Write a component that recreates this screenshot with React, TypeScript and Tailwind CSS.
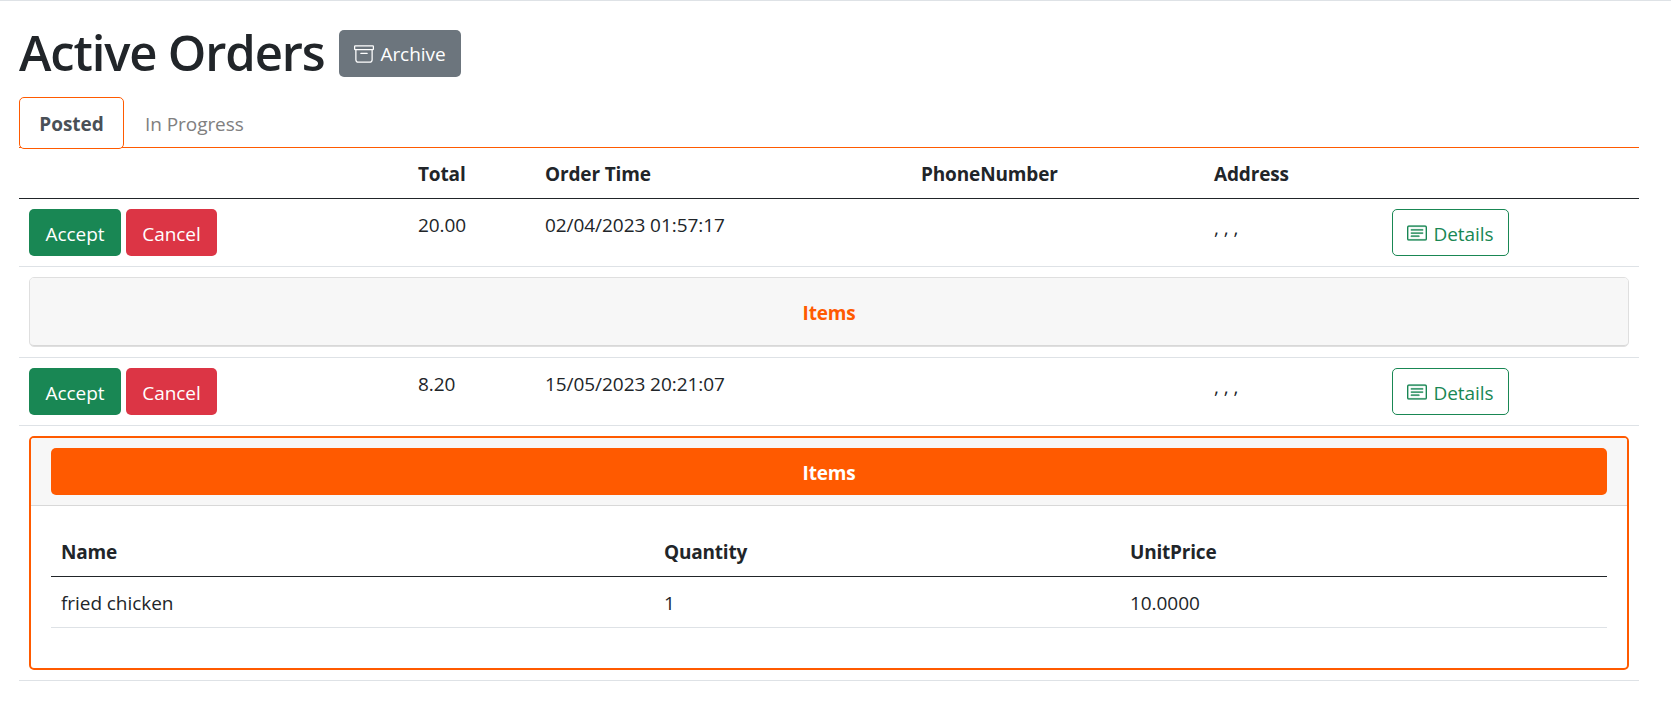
import { BsArchive, BsCardText } from "react-icons/bs";

const orders = [
  { total: "20.00", time: "02/04/2023 01:57:17", phone: "", address: ", , ," },
  { total: "8.20", time: "15/05/2023 20:21:07", phone: "", address: ", , ," },
];

const cols = "grid grid-cols-[389px_127px_376px_293px_178px_1fr]";
const itemCols = "grid grid-cols-[603px_466px_1fr]";
const button =
  "flex h-[47px] items-center justify-center rounded-[5px] text-white";

function OrderRow({ order }: { order: (typeof orders)[number] }) {
  return (
    <div className={`${cols} h-[68px] border-b border-[#dee2e6]`}>
      <div className="flex gap-[5px] px-2.5 pt-2.5">
        <button className={`${button} w-[92px] bg-[#198754] pt-0.5`}>Accept</button>
        <button className={`${button} w-[91px] bg-[#dc3545] pt-0.5`}>Cancel</button>
      </div>
      <div className="px-2.5 pt-[11px]">{order.total}</div>
      <div className="px-2.5 pt-[11px]">{order.time}</div>
      <div className="px-2.5 pt-[11px]">{order.phone}</div>
      <div className="px-2.5 pt-3.5">{order.address}</div>
      <div className="px-2.5 pt-2.5">
        <button className="flex h-[47px] w-[117px] items-center justify-center gap-1.5 rounded-[5px] border border-[#198754] text-[#198754]">
          <BsCardText size={20} strokeWidth={0.2} />
          <span className="pt-0.5">Details</span>
        </button>
      </div>
    </div>
  );
}

export default function App() {
  return (
    <div className="h-[703px] border-t border-[#dee2e6] bg-white pl-[19px] font-['Open_Sans',sans-serif] text-[19px] leading-[30px] tracking-[-0.06px] text-[#212529]">
      <div className="w-[1620px]">
        <header className="flex h-24 items-start pt-[29px]">
          <h1 className="w-80 whitespace-nowrap text-[49px] leading-[44px] font-semibold tracking-[-1.15px]">
            Active Orders
          </h1>
          <button className={`${button} w-[122px] gap-1.5 bg-[#6c757d]`}>
            <BsArchive size={20} />
            <span>Archive</span>
          </button>
        </header>

        <nav className="flex h-[51px] border-b border-[#ff5a00]">
          <button className="h-[52px] w-[105px] shrink-0 rounded-[5px] border border-[#ff5a00] bg-white pt-0.5 font-bold text-[#495057]">
            Posted
          </button>
          <button className="h-[52px] px-[21px] pt-0.5 text-[#808080]">In Progress</button>
        </nav>

        <div className={`${cols} h-[51px] border-b border-[#212529] pt-[11px] font-bold tracking-[-0.15px]`}>
          <div />
          <div className="px-2.5">Total</div>
          <div className="px-2.5">Order Time</div>
          <div className="px-2.5">PhoneNumber</div>
          <div className="px-2.5">Address</div>
          <div />
        </div>

        <OrderRow order={orders[0]} />
        <div className="border-b border-[#dee2e6] p-2.5">
          <div className="h-[70px] rounded-[5px] border border-[#dfdfdf] bg-white">
            <div className="flex h-[68px] items-center justify-center rounded-[4px] border-b border-[#d8d8d8] bg-[#f7f7f7] pt-0.5 font-bold tracking-[-0.2px] text-[#ff5a00]">
              Items
            </div>
          </div>
        </div>

        <OrderRow order={orders[1]} />
        <div className="border-b border-[#dee2e6] p-2.5">
          <div className="h-[234px] overflow-hidden rounded-[5px] border-2 border-[#ff5a00]">
            <div className="h-[68px] border-b border-[#d8d8d8] bg-[#f7f7f7] px-5 py-2.5">
              <div className={`${button} bg-[#ff5a00] pt-0.5 font-bold tracking-[-0.2px]`}>Items</div>
            </div>
            <div className="p-5">
              <div className={`${itemCols} h-[51px] border-b border-[#212529] pt-[11px] font-bold tracking-[-0.2px]`}>
                <div className="px-2.5">Name</div>
                <div className="px-2.5">Quantity</div>
                <div className="px-2.5">UnitPrice</div>
              </div>
              <div className={`${itemCols} h-[51px] border-b border-[#dee2e6] pt-[11px]`}>
                <div className="px-2.5">fried chicken</div>
                <div className="px-2.5">1</div>
                <div className="px-2.5">10.0000</div>
              </div>
            </div>
          </div>
        </div>
      </div>
    </div>
  );
}
